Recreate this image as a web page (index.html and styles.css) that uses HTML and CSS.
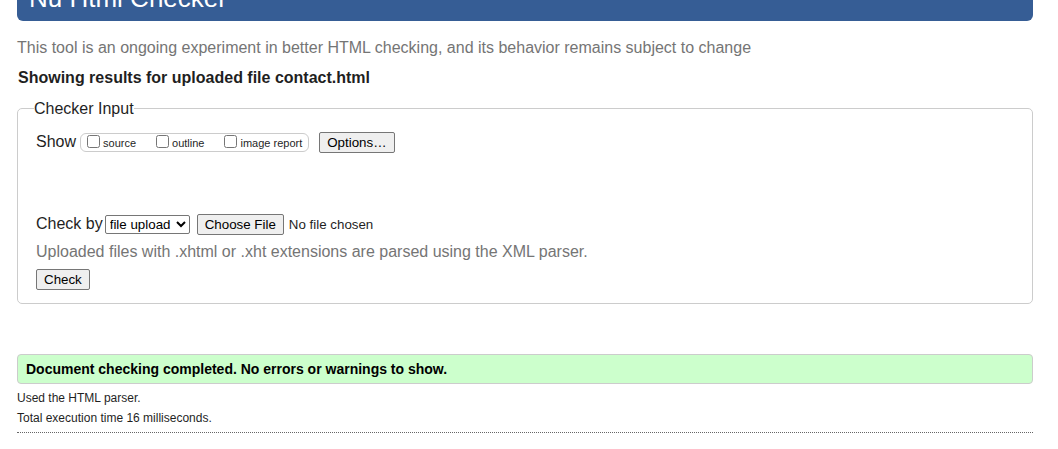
FILE: index.html
```html
<!DOCTYPE html>
<html lang="en">
<head>
<meta charset="utf-8">
<title>Nu Html Checker</title>
<link rel="stylesheet" href="styles.css">
</head>
<body>
<header class="banner"><h1 class="banner-title">Nu Html Checker</h1></header>
<main>
<p class="note">This tool is an ongoing experiment in better HTML checking, and its behavior remains subject to change</p>
<h2 class="subject">Showing results for uploaded file contact.html</h2>
<form class="form">
<fieldset class="panel">
<legend class="legend">Checker Input</legend>
<div class="row show-row">
<span class="row-label show-label">Show</span>
<span class="options">
<label class="option"><input class="tick" type="checkbox">source</label>
<label class="option"><input class="tick" type="checkbox">outline</label>
<label class="option"><input class="tick" type="checkbox">image report</label>
</span>
<button class="button" type="button">Options…</button>
</div>
<div class="row check-row">
<label class="row-label check-label" for="method">Check by</label>
<select class="method" id="method"><option>file upload</option></select>
<input class="file" type="file" aria-label="File to check">
</div>
<p class="hint">Uploaded files with .xhtml or .xht extensions are parsed using the XML parser.</p>
<button class="button" type="button">Check</button>
</fieldset>
</form>
<p class="success">Document checking completed. No errors or warnings to show.</p>
<div class="details">
<p class="detail">Used the HTML parser.</p>
<p class="detail">Total execution time 16 milliseconds.</p>
</div>
</main>
</body>
</html>
```

FILE: styles.css
```css
* {
  box-sizing: border-box;
}

body {
  margin: 0;
  padding: 0 25px 16px 17px;
  background: #fff;
  color: #1f1f1f;
  font: 16px/20px "Liberation Sans", Arial, sans-serif;
  overflow: hidden;
}

p,
h1,
h2 {
  margin: 0;
}

.banner {
  margin-top: -28px;
  padding: 11px 12px 8px;
  border-radius: 6px;
  background: #365d95;
  color: #fff;
}

.banner-title {
  font-size: 26px;
  line-height: 30px;
  font-weight: 400;
}

.note {
  margin-top: 17px;
  color: #757575;
}

.subject {
  margin: 10px 0 0 1px;
  font-size: 16px;
  line-height: 20px;
  font-weight: 700;
}

.panel {
  min-width: 0;
  margin: 9px 0 0;
  padding: 13px 18px;
  border: 1px solid #ccc;
  border-radius: 5px;
}

.legend {
  margin-left: -2px;
  padding: 2px 0 0;
}

.row {
  display: flex;
  align-items: center;
}

.row-label {
  padding-bottom: 1px;
}

.options {
  display: flex;
  align-items: center;
  gap: 20px;
  height: 19px;
  margin: 0 10px 0 4px;
  padding: 0 6px;
  border: 1px solid #ccc;
  border-radius: 6px;
}

.option {
  display: flex;
  align-items: center;
  font-size: 11px;
  line-height: 17px;
  padding-top: 2px;
}

.tick {
  width: 13px;
  height: 13px;
  margin: 0 3px 4px 0;
}

.button,
.method,
.file,
.file::file-selector-button {
  font-family: "Liberation Sans", Arial, sans-serif;
}

.button,
.file::file-selector-button {
  height: 21px;
  padding: 0 7px;
  border: 1px solid #767676;
  border-radius: 2px;
  background: #efefef;
  color: #000;
}

.check-row {
  margin-top: 61px;
}

.check-label {
  margin-right: 2px;
}

.method {
  width: 85px;
  height: 19px;
  margin-right: 7px;
  border: 1px solid #767676;
  border-radius: 2px;
  background: #fff;
  color: #000;
}

.file {
  width: 260px;
}

.file::file-selector-button {
  margin-right: 5px;
}

.hint {
  margin: 7px 0;
  color: #757575;
}

.success {
  margin-top: 50px;
  padding: 4px 8px;
  border: 1px solid #ccc;
  border-radius: 4px;
  background: #cfc;
  color: #000;
  font-size: 14px;
  font-weight: 700;
}

.details {
  padding: 4px 0;
  border-bottom: 1px dotted #666;
}

.detail {
  font-size: 12px;
}
```
